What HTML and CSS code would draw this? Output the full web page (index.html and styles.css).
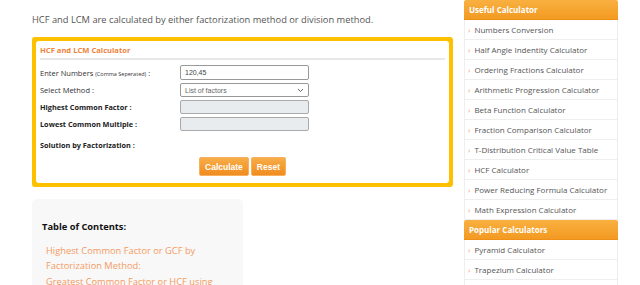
FILE: index.html
```html
<!DOCTYPE html>
<html lang="en">
<head>
  <meta charset="UTF-8">
  <title>HCF and LCM Calculator</title>
  <link rel="stylesheet" href="styles.css">
</head>
<body>
  <div class="page">
    <!-- Основная колонка -->
    <main class="content">
      <p class="intro">HCF and LCM are calculated by either factorization method or division method.</p>

      <div class="calc-wrap">
        <div class="calc">
          <h3 class="calc-title">HCF and LCM Calculator</h3>
          <div class="calc-row">
            <label>Enter Numbers <small>(Comma Seperated)</small> :</label>
            <input class="field" type="text" value="120,45">
          </div>
          <div class="calc-row">
            <label>Select Method :</label>
            <div class="field select">
              <span>List of factors</span>
              <svg width="7" height="5" viewBox="0 0 7 5"><path d="M1 1l2.5 2.5L6 1" fill="none" stroke="#666" stroke-width="1"/></svg>
            </div>
          </div>
          <div class="calc-row">
            <label class="bold">Highest Common Factor :</label>
            <div class="field readonly"></div>
          </div>
          <div class="calc-row">
            <label class="bold">Lowest Common Multiple :</label>
            <div class="field readonly"></div>
          </div>
          <div class="calc-row solution">
            <label class="bold">Solution by Factorization :</label>
          </div>
          <div class="calc-buttons">
            <button class="btn">Calculate</button>
            <button class="btn">Reset</button>
          </div>
        </div>
      </div>

      <div class="toc">
        <h4>Table of Contents:</h4>
        <ul>
          <li><a href="#">Highest Common Factor or GCF by Factorization Method:</a></li>
          <li><a href="#">Greatest Common Factor or HCF using Division Method:</a></li>
        </ul>
      </div>
    </main>

    <!-- Сайдбар -->
    <aside class="sidebar">
      <div class="side-head">Useful Calculator</div>
      <ul class="side-list">
        <li><a href="#">Numbers Conversion</a></li>
        <li><a href="#">Half Angle Indentity Calculator</a></li>
        <li><a href="#">Ordering Fractions Calculator</a></li>
        <li><a href="#">Arithmetic Progression Calculator</a></li>
        <li><a href="#">Beta Function Calculator</a></li>
        <li><a href="#">Fraction Comparison Calculator</a></li>
        <li><a href="#">T-Distribution Critical Value Table</a></li>
        <li><a href="#">HCF Calculator</a></li>
        <li><a href="#">Power Reducing Formula Calculator</a></li>
        <li><a href="#">Math Expression Calculator</a></li>
      </ul>
      <div class="side-head">Popular Calculators</div>
      <ul class="side-list">
        <li><a href="#">Pyramid Calculator</a></li>
        <li><a href="#">Trapezium Calculator</a></li>
        <li><a href="#">Cone Calculator</a></li>
      </ul>
    </aside>
  </div>
</body>
</html>
```

FILE: styles.css
```css
/* Основные стили */
* {
  margin: 0;
  padding: 0;
  box-sizing: border-box;
}

body {
  font-family: 'Open Sans', 'Liberation Sans', sans-serif;
  background: #fff;
  color: #555;
  overflow: hidden;
}

.page {
  display: flex;
  gap: 11px;
  padding-left: 32px;
}

/* Основная колонка */
.content {
  width: 421px;
}

.intro {
  font-size: 9.3px;
  line-height: 14px;
  margin-top: 13px;
  margin-bottom: 10px;
}

/* Калькулятор */
.calc-wrap {
  background: #ffc000;
  border-radius: 3px;
  padding: 4px;
}

.calc {
  background: #fff;
  border-radius: 3px;
  padding: 0 4px 7px;
}

.calc-title {
  font-size: 7.6px;
  font-weight: bold;
  color: #f0823c;
  line-height: 12px;
  padding: 3px 0 2px;
  border-bottom: 2px solid #e8e8e8;
  margin-bottom: 5px;
}

.calc-row {
  display: flex;
  align-items: center;
  height: 14px;
  margin-bottom: 3px;
}

.calc-row:first-of-type {
  height: 15px;
}

.calc-row label {
  width: 140px;
  font-size: 7.5px;
  color: #333;
}

.calc-row label small {
  font-size: 5.5px;
}

.calc-row label.bold {
  font-size: 7.3px;
  font-weight: bold;
  color: #222;
}

.field {
  width: 129px;
  height: 15px;
  border: 1px solid #999;
  border-radius: 2px;
  font-family: 'Liberation Sans', sans-serif;
  font-size: 7px;
  color: #444;
  padding: 0 4px;
  background: #fff;
}

.select {
  display: flex;
  align-items: center;
  justify-content: space-between;
  color: #666;
  height: 14px;
}

.readonly {
  background: #e9ecef;
  height: 14px;
  border-color: #aaa;
}

.calc-row.solution {
  height: 15px;
  margin-top: 6px;
  margin-bottom: 5px;
}

.calc-buttons {
  display: flex;
  justify-content: center;
  gap: 2px;
}

.btn {
  font-family: 'Liberation Sans', sans-serif;
  font-size: 8.5px;
  font-weight: bold;
  color: #fff;
  background: linear-gradient(#f8ad48, #f08c1f);
  border: 1px solid #f6b060;
  border-radius: 2px;
  height: 19px;
  padding: 0 5px;
}

/* Оглавление */
.toc {
  margin-top: 12px;
  width: 211px;
  background: #f8f8f8;
  border-radius: 5px;
  padding: 21px 10px 20px;
}

.toc h4 {
  font-size: 9.3px;
  color: #111;
  margin-bottom: 10px;
}

.toc ul {
  list-style: none;
  padding-left: 4px;
}

.toc li {
  font-size: 9.3px;
  line-height: 15px;
  margin-bottom: 1px;
}

.toc a {
  color: #f59a62;
  text-decoration: none;
}

/* Сайдбар */
.sidebar {
  width: 154px;
}

.side-head {
  height: 20px;
  line-height: 19px;
  padding-left: 5px;
  font-size: 8px;
  font-weight: bold;
  color: #fff;
  background: linear-gradient(#f9b040, #f39a22);
  border-bottom: 1px solid #ee8f1a;
  border-radius: 2px 2px 0 0;
}

.side-list {
  list-style: none;
  border-left: 1px solid #eee;
  border-right: 1px solid #eee;
}

.side-list li {
  height: 20px;
  line-height: 19px;
  border-bottom: 1px solid #eee;
  padding-left: 3px;
  font-size: 8px;
}

.side-list li::before {
  content: '›';
  color: #f0a060;
  font-size: 8px;
  margin-right: 4px;
}

.side-list a {
  color: #555;
  text-decoration: none;
}
```
